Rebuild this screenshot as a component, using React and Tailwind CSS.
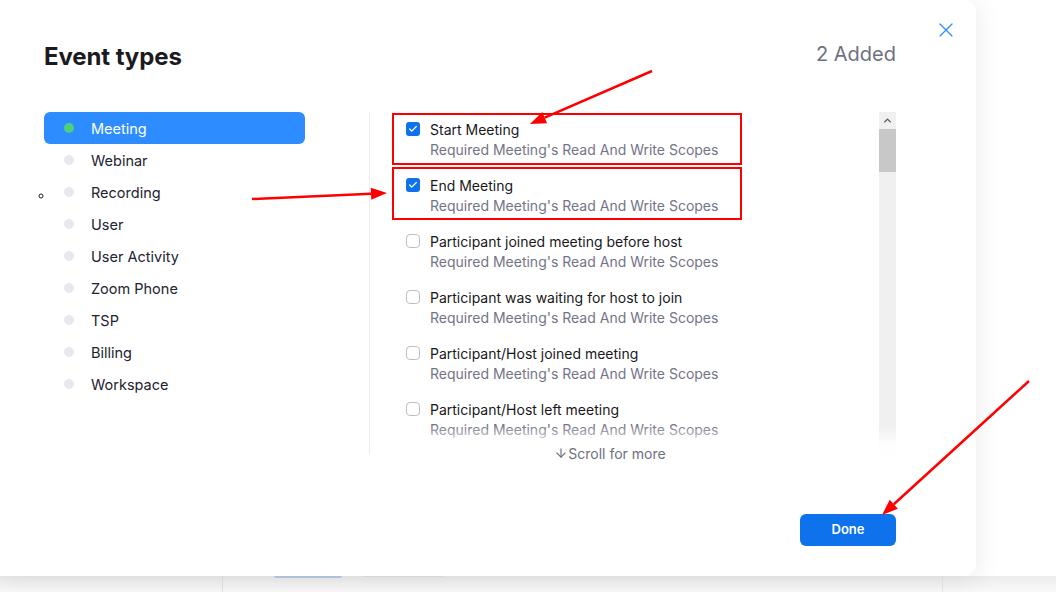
import { X, ChevronUp, ArrowDown, Check } from 'lucide-react';

const categories = ['Meeting', 'Webinar', 'Recording', 'User', 'User Activity', 'Zoom Phone', 'TSP', 'Billing', 'Workspace'];

const events = [
  { name: 'Start Meeting', checked: true },
  { name: 'End Meeting', checked: true },
  { name: 'Participant joined meeting before host', checked: false },
  { name: 'Participant was waiting for host to join', checked: false },
  { name: 'Participant/Host joined meeting', checked: false },
  { name: 'Participant/Host left meeting', checked: false },
  { name: 'Meeting Sharing Started', checked: false },
];

function Arrow({ x1, y1, x2, y2 }) {
  const a = Math.atan2(y2 - y1, x2 - x1);
  const len = 16;
  const w = 6;
  const bx = x2 - len * Math.cos(a);
  const by = y2 - len * Math.sin(a);
  const p1 = `${bx + w * Math.sin(a)},${by - w * Math.cos(a)}`;
  const p2 = `${bx - w * Math.sin(a)},${by + w * Math.cos(a)}`;
  return (
    <g>
      <line x1={x1} y1={y1} x2={bx} y2={by} stroke="#ff0000" strokeWidth="2.5" />
      <polygon points={`${x2},${y2} ${p1} ${p2}`} fill="#ff0000" />
    </g>
  );
}

function App() {
  return (
    <div className="relative w-[1056px] h-[592px] overflow-hidden bg-white font-['Inter',sans-serif] flex flex-col">
      <div className="relative z-10 w-[976px] h-[576px] shrink-0 bg-white rounded-r-[12px] shadow-[0_2px_28px_rgba(0,0,0,0.09)] pl-[44px] pr-[80px] flex flex-col">
        <button className="absolute top-[18px] left-[934px] text-[#2d8cff]">
          <X size={24} strokeWidth={1.2} />
        </button>

        <div className="flex items-center justify-between h-[112px] pb-[2px]">
          <h1 className="text-[24px] font-bold text-[#1b1b1f] tracking-[-0.1px] mt-[3px]">Event types</h1>
          <span className="text-[20px] text-[#6e7081] -mt-[2px]">2 Added</span>
        </div>

        <div className="flex h-[350px]">
          <ul className="w-[261px] shrink-0">
            {categories.map((c, i) => (
              <li
                key={c}
                className={`flex items-center h-[32px] pl-[20px] gap-[17px] rounded-[6px] text-[14.5px] ${
                  i === 0 ? 'bg-[#2d8cff] text-white' : 'text-[#222230]'
                }`}
              >
                <span className={`w-[10px] h-[10px] rounded-full ${i === 0 ? 'bg-[#4fcf7d]' : 'bg-[#e8e8ef]'}`} />
                <span className="pt-[2px]">{c}</span>
              </li>
            ))}
          </ul>

          <div className="ml-[64px] w-px h-[343px] bg-[#ebebf0]" />

          <div className="relative flex-1 overflow-hidden">
            <div className="flex h-full">
              <ul className="flex-1 pl-[36px] pt-[1px]">
                {events.map((e) => (
                  <li key={e.name} className="h-[56px] pt-[6px]">
                    <div className="flex items-center gap-[10px] h-[20px]">
                      {e.checked ? (
                        <span className="w-[14px] h-[14px] rounded-[3px] bg-[#0e72ed] flex items-center justify-center">
                          <Check size={10} strokeWidth={3} className="text-white" />
                        </span>
                      ) : (
                        <span className="w-[14px] h-[14px] rounded-[4px] border border-[#bdbdcc] bg-white" />
                      )}
                      <span className="text-[14px] text-[#18181c]">{e.name}</span>
                    </div>
                    <p className="pl-[24px] mt-[1px] text-[14px] leading-[20px] text-[#747487]">Required Meeting's Read And Write Scopes</p>
                  </li>
                ))}
              </ul>
              <div className="w-[17px] shrink-0 bg-[#f0f0f0] flex flex-col">
                <div className="h-[17px] flex items-center justify-center text-[#555]">
                  <ChevronUp size={11} strokeWidth={3} />
                </div>
                <div className="h-[43px] bg-[#c8c8c8]" />
              </div>
            </div>
            <div className="absolute left-0 right-0 bottom-0 h-[36px] bg-gradient-to-b from-white/0 via-white/90 to-white" />
            <div className="absolute left-0 right-0 bottom-[-1px] h-[20px] flex items-center justify-center text-[14px] text-[#6e7081] pr-[46px]">
              <ArrowDown size={14} strokeWidth={2} />
              <span>Scroll for more</span>
            </div>
          </div>
        </div>

        <div className="flex justify-end mt-[52px]">
          <button className="w-[96px] h-[32px] rounded-[6px] bg-[#0e72ed] text-white text-[13px] font-semibold">Done</button>
        </div>
      </div>

      <div className="relative flex-1 bg-gradient-to-b from-[#ececec] to-[#f9f9f9]">
        <div className="absolute left-[222px] top-0 bottom-0 w-px bg-[#e2e2e2]" />
        <div className="absolute left-[274px] top-0 w-[68px] h-[2px] rounded-b bg-[#b8cbe6]" />
        <div className="absolute left-[363px] top-0 w-[80px] h-px bg-[#e0e0e0]" />
        <div className="absolute left-[942px] top-0 bottom-0 w-px bg-[#e6e6e6]" />
      </div>

      <div className="absolute left-[392px] top-[113px] w-[350px] h-[52px] border-2 border-[#ff0000] z-20" />
      <div className="absolute left-[392px] top-[167px] w-[350px] h-[53px] border-2 border-[#ff0000] z-20" />

      <svg className="absolute inset-0 z-30 pointer-events-none" width="1056" height="592">
        <Arrow x1={652} y1={71} x2={530} y2={124} />
        <Arrow x1={252} y1={199} x2={387} y2={193} />
        <Arrow x1={1029} y1={381} x2={882} y2={515} />
        <circle cx="41" cy="196" r="2" fill="none" stroke="#222" strokeWidth="1" />
      </svg>
    </div>
  );
}

export default App;
